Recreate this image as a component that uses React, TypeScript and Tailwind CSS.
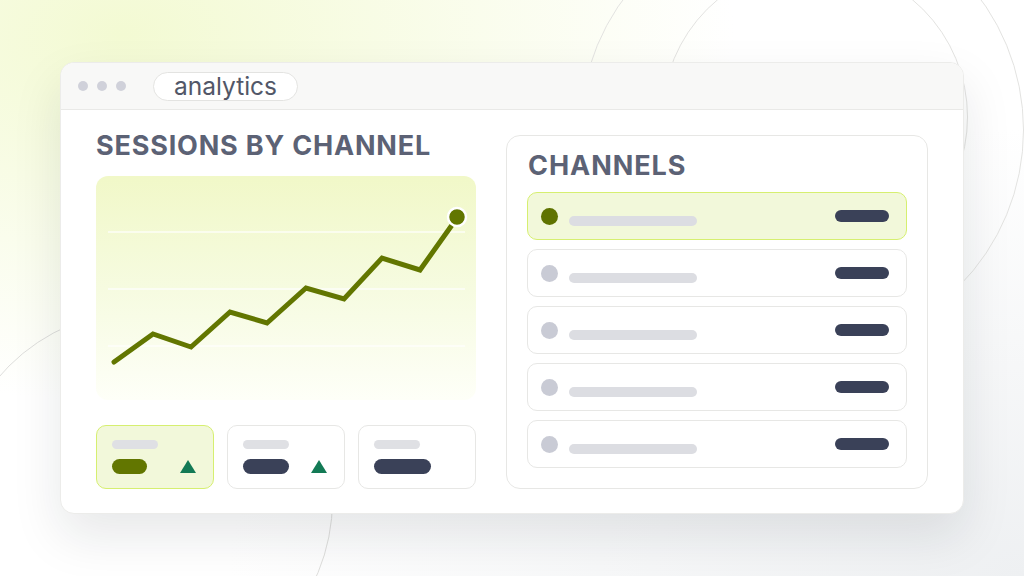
import React from 'react';

const points = [
  [18, 186],
  [57, 158],
  [95, 171],
  [134, 136],
  [171, 147],
  [210, 112],
  [248, 123],
  [286, 82],
  [324, 94],
  [361, 42],
];

function Chart() {
  const d = points.map(([x, y], i) => `${i ? 'L' : 'M'}${x} ${y}`).join(' ');
  return (
    <div className="h-[224px] rounded-[12px] bg-gradient-to-b from-[#f1f8c8] via-[#f6fbe0] to-[#fefff8]">
      <svg width="380" height="224" viewBox="0 0 380 224">
        {[56, 113, 170].map((y) => (
          <line key={y} x1="12" x2="369" y1={y} y2={y} stroke="#ffffff" strokeOpacity="0.8" strokeWidth="1.5" />
        ))}
        <path d={d} fill="none" stroke="#627600" strokeWidth="5" strokeLinejoin="miter" strokeLinecap="round" />
        <circle cx="361" cy="41" r="9" fill="#627600" stroke="#ffffff" strokeWidth="2.5" />
      </svg>
    </div>
  );
}

function StatCard({ active, bar, trend }: { active?: boolean; bar: string; trend?: boolean }) {
  return (
    <div
      className={`h-[64px] w-[118px] rounded-[10px] border pl-[15px] pr-[17px] pt-[14px] ${
        active ? 'border-[#d6ef70] bg-[#f2f8da]' : 'border-[#e7e7e5] bg-white'
      }`}
    >
      <div className="h-[9px] w-[46px] rounded-full bg-[#dfe0e4]" />
      <div className="mt-[10px] flex items-center justify-between">
        <div className={`h-[15px] rounded-full ${bar}`} />
        {trend && (
          <svg width="16" height="13" viewBox="0 0 16 13">
            <path d="M8 0 L16 13 L0 13 Z" fill="#137a55" />
          </svg>
        )}
      </div>
    </div>
  );
}

function ChannelRow({ active }: { active?: boolean }) {
  return (
    <div
      className={`flex h-[48px] items-center rounded-[10px] border pl-[13px] pr-[17px] ${
        active ? 'border-[#d6ef70] bg-[#f2f8da]' : 'border-[#e7e7e5] bg-white'
      }`}
    >
      <div className={`h-[17px] w-[17px] rounded-full ${active ? 'bg-[#5f7300]' : 'bg-[#c9cbd5]'}`} />
      <div className="ml-[11px] mt-[10px] h-[10px] w-[128px] rounded-full bg-[#dcdde2]" />
      <div className="ml-auto h-[12px] w-[54px] rounded-full bg-[#3a4158]" />
    </div>
  );
}

export default function App() {
  return (
    <div className="relative h-[576px] w-[1024px] overflow-hidden bg-white bg-[radial-gradient(ellipse_at_12%_6%,#f3fad3_0%,rgba(255,255,255,0)_48%),radial-gradient(ellipse_at_100%_100%,#eef0f2_0%,rgba(255,255,255,0)_55%)] font-['Inter',sans-serif]">
      {/* decorative rings */}
      <div className="absolute left-[580px] top-[-92px] h-[444px] w-[444px] rounded-full border border-[#e3e3e1]" />
      <div className="absolute left-[662px] top-[-36px] h-[306px] w-[306px] rounded-full border border-[#e3e3e1]" />
      <div className="absolute left-[-47px] top-[310px] h-[380px] w-[380px] rounded-full border border-[#dededc]" />

      <div className="relative pl-[60px] pt-[62px]">
        <div className="h-[452px] w-[904px] overflow-hidden rounded-[14px] border border-[#ececea] bg-white shadow-[0_22px_50px_rgba(20,30,40,0.1)]">
          <div className="flex h-[47px] items-center border-b border-[#e9e9e7] bg-[#f8f8f7] pl-[17px]">
            <div className="flex gap-[9px]">
              <div className="h-[10px] w-[10px] rounded-full bg-[#d0d1da]" />
              <div className="h-[10px] w-[10px] rounded-full bg-[#d0d1da]" />
              <div className="h-[10px] w-[10px] rounded-full bg-[#d0d1da]" />
            </div>
            <div className="ml-[27px] flex h-[29px] w-[145px] items-center justify-center rounded-full border border-[#e3e3e1] bg-white text-[24.5px] leading-none text-[#525768]">
              analytics
            </div>
          </div>

          <div className="flex gap-[30px] px-[35px] pt-[22px]">
            <div className="w-[380px]">
              <div className="text-[27px] font-bold leading-[28px] tracking-[0.03em] text-[#5c6275]">
                SESSIONS BY CHANNEL
              </div>
              <div className="mt-[16px]">
                <Chart />
              </div>
              <div className="mt-[25px] flex gap-[13px]">
                <StatCard active bar="w-[35px] bg-[#627600]" trend />
                <StatCard bar="w-[46px] bg-[#3a4158]" trend />
                <StatCard bar="w-[57px] bg-[#3a4158]" />
              </div>
            </div>

            <div className="mt-[3px] h-[354px] w-[423px] rounded-[14px] border border-[#e7e7e5] px-[20px] pt-[16px]">
              <div className="ml-[1px] text-[27px] font-bold leading-[28px] tracking-[0.035em] text-[#5c6275]">CHANNELS</div>
              <div className="mt-[12px] flex flex-col gap-[9px]">
                <ChannelRow active />
                <ChannelRow />
                <ChannelRow />
                <ChannelRow />
                <ChannelRow />
              </div>
            </div>
          </div>
        </div>
      </div>
    </div>
  );
}
